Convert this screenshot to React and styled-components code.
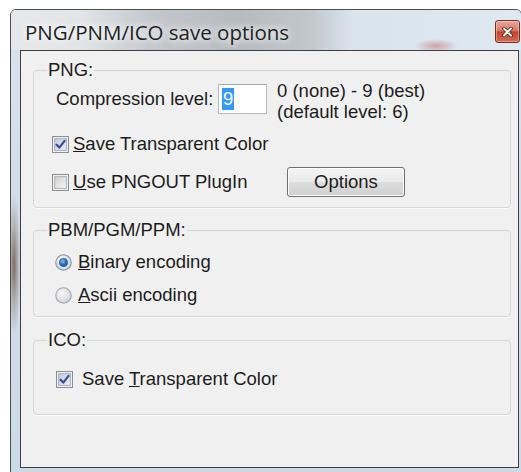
import React, { useId } from 'react'
import styled, { createGlobalStyle } from 'styled-components'

const GlobalStyle = createGlobalStyle`
  html, body {
    margin: 0;
    padding: 0;
    background: #fff;
    overflow: hidden;
  }
  body {
    font-family: "Liberation Sans", Arial, sans-serif;
    color: #1c1c1c;
  }
`

const Page = styled.div`
  box-sizing: border-box;
  height: 472px;
  padding: 9px 0 0 10px;
`

const Window = styled.div`
  box-sizing: border-box;
  width: 512px;
  height: 464px;
  display: flex;
  flex-direction: column;
  overflow: hidden;
  border: 1px solid #4b4f54;
  border-radius: 6px 6px 0 0;
  background:
    radial-gradient(ellipse 7px 70px at 3px 75px, rgba(96, 70, 58, 0.75), rgba(120, 96, 84, 0.3) 60%, transparent) 0 180px / 100% 150px no-repeat,
    linear-gradient(180deg, #dbe3ea 0%, #d2dde7 45%, #ccdae7 100%);
`

const TitleBar = styled.div`
  flex: none;
  height: 40px;
  display: flex;
  align-items: flex-start;
  justify-content: space-between;
  padding: 0 1px 0 14px;
  background:
    radial-gradient(ellipse 22px 7px at 425px 36px, rgba(190, 80, 80, 0.45), transparent),
    linear-gradient(90deg, #e6e8ea 0, #e2e4e6 70px, #c4c8cc 140px, #b6bbbf 230px, #c2c7cb 300px, #d9e3ec 340px, #dfe9f2 100%);
`

const Title = styled.span`
  margin-top: 9px;
  font-family: "Open Sans", "Liberation Sans", sans-serif;
  font-size: 20.5px;
  line-height: 26px;
  color: #1f1f1f;
  text-shadow: 0 0 6px #fff, 0 0 12px rgba(255, 255, 255, 0.9);
`

const CloseButton = styled.div`
  margin-top: 10px;
  width: 25px;
  height: 23px;
  display: flex;
  align-items: center;
  justify-content: center;
  box-sizing: border-box;
  border: 1px solid #7a2c22;
  border-radius: 3px;
  background: linear-gradient(180deg, #e8a898 0%, #d77a66 45%, #c2432e 52%, #d36a52 100%);
  box-shadow: inset 0 0 0 1px rgba(255, 255, 255, 0.35);
`

const Client = styled.div`
  flex: 1;
  display: flex;
  flex-direction: column;
  margin: 0 2px 4px 9px;
  padding: 9px 7px 0 12px;
  border: 1px solid #3d3f42;
  background: #f0f0f0;
`

const Group = styled.fieldset`
  min-width: 0;
  margin: ${p => p.$space}px 0 0;
  padding: ${p => p.$pad};
  border: 1px solid #d6d9dc;
  border-radius: 4px;
  box-shadow: 0 1px 0 #fbfbfb;
`

const Legend = styled.legend`
  padding: 0 1px;
  font-size: 18.5px;
  line-height: 20px;
`

const LevelRow = styled.div`
  display: flex;
  align-items: center;
  height: 30px;
  padding-left: 9px;
  font-size: 18.5px;
`

const LevelLabel = styled.span`
  width: 162px;
  flex: none;
`

const TextBox = styled.div`
  box-sizing: border-box;
  width: 49px;
  height: 30px;
  display: flex;
  align-items: center;
  padding-left: 3px;
  border: 1px solid #b5b9c0;
  border-top-color: #a3a8b0;
  background: #fff;
`

const Selected = styled.span`
  background: #3399ff;
  color: #fff;
  line-height: 22px;
  padding: 0 1px;
`

const Hint = styled.div`
  margin: 3px 0 0 10px;
  line-height: 21px;
`

const OptionRow = styled.div`
  display: flex;
  align-items: center;
  height: 22px;
  margin-top: ${p => p.$space || 0}px;
  padding-left: ${p => p.$indent || 0}px;
  gap: ${p => p.$gap || 5}px;
  font-size: 18.5px;
`

const PlugInRow = styled.div`
  display: grid;
  grid-template-columns: 235px auto;
  align-items: center;
  margin-top: 12px;
  padding-left: 5px;
`

const Button = styled.button`
  box-sizing: border-box;
  width: 118px;
  height: 30px;
  padding: 0;
  border: 1px solid #707070;
  border-radius: 3px;
  background: linear-gradient(180deg, #f3f3f3 0%, #ebebeb 48%, #dddddd 52%, #cfcfcf 100%);
  box-shadow: inset 0 0 0 1px #fbfbfb;
  font-family: "Liberation Sans", Arial, sans-serif;
  font-size: 18.5px;
  color: #1c1c1c;
`

const Glyph = styled.svg`
  flex: none;
  display: block;
`

const CheckBox = ({ checked }) => {
  const id = useId()
  return (
    <Glyph width="17" height="17" viewBox="0 0 16 16">
      <defs>
        <linearGradient id={id} x1="0" y1="0" x2="1" y2="1">
          <stop offset="0" stopColor={checked ? '#c3c9dd' : '#cfcfcf'} />
          <stop offset="1" stopColor={checked ? '#eef0f7' : '#f7f7f7'} />
        </linearGradient>
      </defs>
      <rect x="0.5" y="0.5" width="15" height="15" fill="#f6f6f6" stroke="#8e8f8f" />
      <rect x="2.5" y="2.5" width="11" height="11" fill={`url(#${id})`} stroke={checked ? '#a9b0c6' : '#b3b3b3'} />
      {checked && (
        <path d="M4.3 8.2 L6.9 10.9 L11.8 4.6" fill="none" stroke="#3c4f96" strokeWidth="2.1" strokeLinecap="round" strokeLinejoin="round" />
      )}
    </Glyph>
  )
}

const Radio = ({ checked }) => {
  const id = useId()
  return (
    <Glyph width="17" height="17" viewBox="0 0 16 16">
      <defs>
        <radialGradient id={`${id}a`} cx="0.4" cy="0.35" r="0.7">
          <stop offset="0" stopColor="#f8f8f8" />
          <stop offset="1" stopColor="#cfd2d6" />
        </radialGradient>
        <radialGradient id={`${id}b`} cx="0.4" cy="0.35" r="0.7">
          <stop offset="0" stopColor="#8cc6f5" />
          <stop offset="0.55" stopColor="#2b6fc2" />
          <stop offset="1" stopColor="#1a4f94" />
        </radialGradient>
      </defs>
      <circle cx="8" cy="8" r="7.3" fill={`url(#${id}a)`} stroke={checked ? '#7b95b4' : '#a3a6aa'} />
      {checked && <circle cx="8" cy="8" r="3.8" fill={`url(#${id}b)`} stroke="#1d4a85" strokeWidth="0.6" />}
    </Glyph>
  )
}

const CloseGlyph = () => (
  <svg width="11" height="10" viewBox="0 0 11 10">
    <path d="M2 1.5 L9 8.5 M9 1.5 L2 8.5" stroke="#5a1a12" strokeWidth="3.6" strokeLinecap="round" />
    <path d="M2 1.5 L9 8.5 M9 1.5 L2 8.5" stroke="#fff" strokeWidth="2" strokeLinecap="round" />
  </svg>
)

const Option = ({ type = 'check', checked, children, ...rest }) => (
  <OptionRow {...rest}>
    {type === 'radio' ? <Radio checked={checked} /> : <CheckBox checked={checked} />}
    <span>{children}</span>
  </OptionRow>
)

export default function App() {
  return (
    <Page>
      <GlobalStyle />
      <Window>
        <TitleBar>
          <Title>PNG/PNM/ICO save options</Title>
          <CloseButton>
            <CloseGlyph />
          </CloseButton>
        </TitleBar>
        <Client>
          <Group $space={0} $pad="4px 8px 10px 13px">
            <Legend>PNG:</Legend>
            <LevelRow>
              <LevelLabel>Compression level:</LevelLabel>
              <TextBox>
                <Selected>9</Selected>
              </TextBox>
              <Hint>
                0 (none) - 9 (best)
                <br />
                (default level: 6)
              </Hint>
            </LevelRow>
            <Option checked $space={19} $indent={5} $gap={4}>
              <u>S</u>ave Transparent Color
            </Option>
            <PlugInRow>
              <Option $gap={4}>
                <u>U</u>se PNGOUT PlugIn
              </Option>
              <Button>Options</Button>
            </PlugInRow>
          </Group>

          <Group $space={12} $pad="11px 8px 10px 13px">
            <Legend>PBM/PGM/PPM:</Legend>
            <Option type="radio" checked $indent={8} $gap={6}>
              <u>B</u>inary encoding
            </Option>
            <Option type="radio" $space={11} $indent={8} $gap={6}>
              <u>A</u>scii encoding
            </Option>
          </Group>

          <Group $space={13} $pad="18px 8px 24px 13px">
            <Legend>ICO:</Legend>
            <Option checked $indent={9} $gap={9}>
              Save <u>T</u>ransparent Color
            </Option>
          </Group>
        </Client>
      </Window>
    </Page>
  )
}
